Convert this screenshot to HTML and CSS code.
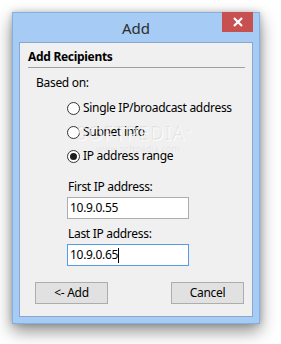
FILE: index.html
```html
<html>
<head>
    <title>Add</title>
    <link rel="stylesheet" href="styles.css">
</head>
<body>

<div id="stage">
    <div class="window">
        <div class="titlebar">
            <span class="title">Add</span>
            <div class="close">
                <svg width="10" height="10" viewBox="0 0 10 10">
                    <path d="M1 1 L9 9 M9 1 L1 9" stroke="#fff" stroke-width="2.2" fill="none"/>
                </svg>
            </div>
        </div>

        <div class="client">
            <div class="group_title">Add Recipients</div>

            <div class="group">
                <div class="based">Based on:</div>

                <div class="options">
                    <div class="option"><span class="radio"></span>Single IP/broadcast address</div>
                    <div class="option"><span class="radio"></span>Subnet info</div>
                    <div class="option"><span class="radio checked"></span>IP address range</div>
                </div>

                <div class="fields">
                    <div class="field_label">First IP address:</div>
                    <div class="textbox">10.9.0.55</div>
                    <div class="field_label second">Last IP address:</div>
                    <div class="textbox focused">10.9.0.65<span class="caret"></span></div>
                </div>
            </div>

            <div class="buttons">
                <div class="button">&lt;- Add</div>
                <div class="button">Cancel</div>
            </div>

            <div class="watermark">SOFTPEDIA<span class="tm">&trade;</span></div>
            <div class="watermark_url">www.softpedia.com</div>
        </div>
    </div>
</div>

</body>
</html>
```

FILE: styles.css
```css
body {
    margin: 0px;
    background: #ffffff;
    font-family: "Noto Sans", "Open Sans", sans-serif;
    font-size: 12px;
    line-height: 16px;
    letter-spacing: -0.3px;
    color: #000000;
}

#stage {
    padding: 12px 0px 0px 12px;
}

.window {
    box-sizing: border-box;
    width: 248px;
    height: 312px;
    padding: 0px 6px 6px 6px;
    background: #a6cbf4;
    border: 1px solid #86aee0;
    box-shadow: 0px 7px 16px rgba(0, 0, 0, 0.45), 0px 0px 6px rgba(0, 0, 0, 0.18);
}

.titlebar {
    position: relative;
    height: 29px;
    display: flex;
    align-items: center;
    justify-content: center;
}

.title {
    font-size: 15px;
    letter-spacing: 0px;
    color: #2d2d2d;
    padding-top: 1px;
}

.close {
    position: absolute;
    top: -1px;
    right: 0px;
    width: 31px;
    height: 20px;
    background: #c75050;
    display: flex;
    align-items: center;
    justify-content: center;
}

.client {
    position: relative;
    box-sizing: border-box;
    height: 275px;
    background: #f0f0f0;
    border: 1px solid #88a8cf;
    padding-top: 6px;
}

.group_title {
    font-weight: bold;
    margin: 0px 7px 0px 8px;
    padding-bottom: 2px;
    border-bottom: 1px solid #a0a0a0;
}

.group {
    padding-left: 16px;
}

.based {
    margin-top: 7px;
}

.options {
    margin-top: 9px;
    padding-left: 31px;
    display: flex;
    flex-direction: column;
    gap: 8px;
}

.option {
    display: flex;
    align-items: center;
    height: 16px;
}

.radio {
    box-sizing: border-box;
    width: 13px;
    height: 13px;
    margin-right: 3px;
    border: 1px solid #333333;
    border-radius: 50%;
    background: #ffffff;
    display: flex;
    align-items: center;
    justify-content: center;
}

.radio.checked::after {
    content: "";
    width: 7px;
    height: 7px;
    border-radius: 50%;
    background: #1e1e1e;
}

.fields {
    margin-top: 15px;
    padding-left: 31px;
}

.field_label {
    padding-left: 1px;
    margin-bottom: 2px;
}

.field_label.second {
    margin-top: 7px;
}

.textbox {
    box-sizing: border-box;
    width: 122px;
    height: 22px;
    padding-left: 2px;
    background: #ffffff;
    border: 1px solid #abadb3;
    display: flex;
    align-items: center;
}

.textbox.focused {
    border-color: #569de5;
}

.caret {
    width: 1px;
    height: 15px;
    background: #000000;
}

.buttons {
    margin-top: 16px;
    padding: 0px 8px 0px 15px;
    display: flex;
    justify-content: space-between;
}

.button {
    box-sizing: border-box;
    width: 73px;
    height: 22px;
    background: #e1e1e1;
    border: 1px solid #adadad;
    display: flex;
    align-items: center;
    justify-content: center;
}

.watermark {
    position: absolute;
    left: 56px;
    top: 80px;
    font-size: 19px;
    line-height: 20px;
    letter-spacing: 1px;
    color: rgba(0, 0, 0, 0.06);
    text-shadow: 1px 1px 0px rgba(255, 255, 255, 0.7);
}

.watermark .tm {
    font-size: 7px;
    vertical-align: top;
}

.watermark_url {
    position: absolute;
    left: 76px;
    top: 101px;
    font-size: 9px;
    line-height: 10px;
    letter-spacing: 0px;
    color: rgba(0, 0, 0, 0.07);
}
```
